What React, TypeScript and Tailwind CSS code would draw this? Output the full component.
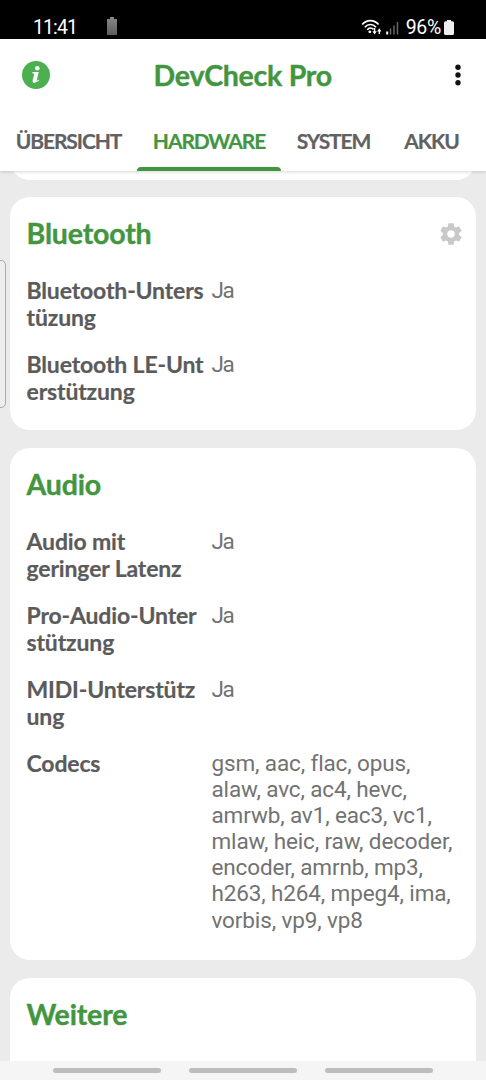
import { type ReactNode } from 'react'

type Row = { label: string[]; value: string[] }

const TABS = [
    { name: 'ÜBERSICHT', active: false, className: 'w-[137px] text-[#616161]' },
    { name: 'HARDWARE', active: true, className: 'w-[144px] text-[#43963f]' },
    { name: 'SYSTEM', active: false, className: 'w-[105px] text-[#616161]' },
    { name: 'AKKU', active: false, className: 'w-[91px] text-[#616161]' },
]

const BLUETOOTH_ROWS: Row[] = [
    { label: ['Bluetooth-Unters', 'tüzung'], value: ['Ja'] },
    { label: ['Bluetooth LE-Unt', 'erstützung'], value: ['Ja'] },
]

const AUDIO_ROWS: Row[] = [
    { label: ['Audio mit', 'geringer Latenz'], value: ['Ja'] },
    { label: ['Pro-Audio-Unter', 'stützung'], value: ['Ja'] },
    { label: ['MIDI-Unterstütz', 'ung'], value: ['Ja'] },
    {
        label: ['Codecs'],
        value: [
            'gsm, aac, flac, opus,',
            'alaw, avc, ac4, hevc,',
            'amrwb, av1, eac3, vc1,',
            'mlaw, heic, raw, decoder,',
            'encoder, amrnb, mp3,',
            'h263, h264, mpeg4, ima,',
            'vorbis, vp9, vp8',
        ],
    },
]

function StatusBar() {
    return (
        <div className="flex h-[39px] shrink-0 items-end bg-black pr-[32px] pl-[33px] font-['Roboto',sans-serif] text-white">
            <span className="w-[74px] text-[19.5px] leading-[23px] tracking-[-0.9px]">11:41</span>
            <svg width="10" height="18" viewBox="0 0 10 18" className="mb-[4px]">
                <defs>
                    <linearGradient id="battery" x1="0" y1="0" x2="0" y2="1">
                        <stop offset="0" stopColor="#8a8a8a" />
                        <stop offset="1" stopColor="#5c5c5c" />
                    </linearGradient>
                </defs>
                <path d="M3 0h4v2h3v16H0V2h3z" fill="url(#battery)" />
            </svg>
            <div className="ml-auto flex items-end">
                <svg width="38" height="17" viewBox="0 0 38 17" className="mr-[7px] mb-[3px]">
                    <g fill="none" stroke="#fff" strokeWidth="1.7">
                        <path d="M1.2 5.5C5.8 .3 13 .3 17.6 5.5" />
                        <path d="M3.8 8.2C7.1 4.6 11.7 4.6 15 8.2" />
                        <path d="M6.2 10.7c2-2.2 4.4-2.2 6.4-.3" />
                    </g>
                    <circle cx="8.8" cy="12.8" r="1.4" fill="#fff" />
                    <path d="M13.6 9v4M18.3 15v-4" stroke="#fff" strokeWidth="1.3" />
                    <path d="M11.4 12.2h4.4l-2.2 3.2zM16.2 12.4h4.2l-2.1-3.2z" fill="#fff" />
                    <path d="M25.2 12.5h2v3h-2z" fill="#fff" />
                    <path d="M28.8 9.5h1.5v6h-1.5zM32.2 6.5h1.5v9h-1.5zM35.7 3h1.5v12.5h-1.5z" fill="#666" />
                </svg>
                <span className="text-[19.5px] leading-[23px] tracking-[-0.3px]">96%</span>
                <svg width="10" height="15" viewBox="0 0 10 15" className="mb-[4px] ml-[3px]">
                    <path d="M3 0h4v1.2h1.5Q10 1.2 10 2.7v10.8Q10 15 8.5 15h-7Q0 15 0 13.5V2.7Q0 1.2 1.5 1.2H3z" fill="#eee" />
                </svg>
            </div>
        </div>
    )
}

function AppHeader() {
    return (
        <header className="z-10 h-[132px] shrink-0 bg-white shadow-[0_1px_3px_rgba(0,0,0,0.16)]">
            <div className="flex h-[72px] items-center justify-between pr-[24px] pl-[21.5px]">
                <svg width="28" height="28" viewBox="0 0 28 28">
                    <circle cx="14" cy="14" r="14" fill="#4caf50" />
                    <circle cx="15.3" cy="7.2" r="2.3" fill="#fff" />
                    <path d="M10.4 11.1h6.4l-2 7.8c-.2.8.5.9 2.2-.5l.5.7c-2 2-3.7 2.7-5 2.7-1.6 0-2.3-1.1-1.8-2.9l1.4-5.3c.2-.9-.1-1.3-1.7-1.4z" fill="#fff" />
                </svg>
                <h1 className="pb-px pl-[2px] text-[28.5px] leading-8 font-bold tracking-[-0.25px] text-[#43963f] [-webkit-text-stroke:0.4px_#43963f]">
                    DevCheck Pro
                </h1>
                <div className="flex w-7 justify-end">
                    <svg width="8" height="22" viewBox="0 0 8 22" fill="#111">
                        <circle cx="4" cy="3.3" r="2.7" />
                        <circle cx="4" cy="11" r="2.7" />
                        <circle cx="4" cy="18.7" r="2.7" />
                    </svg>
                </div>
            </div>
            <nav className="flex h-[60px]">
                {TABS.map((tab) => (
                    <div
                        key={tab.name}
                        className={`flex shrink-0 flex-col items-center text-[21px] font-bold tracking-[-1.1px] [-webkit-text-stroke:0.2px] ${tab.className}`}
                    >
                        <span className="flex h-14 items-center">
                            <span className="pt-[3px] leading-[26px]">{tab.name}</span>
                        </span>
                        {tab.active && <span className="h-1 w-full rounded-t-[4px] bg-[#43963f]" />}
                    </div>
                ))}
            </nav>
        </header>
    )
}

function Card({ title, action, rows = [] }: { title: string; action?: ReactNode; rows?: Row[] }) {
    return (
        <section className="mb-[18px] shrink-0 rounded-[20px] bg-white px-[16.5px] pb-[25px]">
            <div className="flex h-[80px] items-start justify-between pt-[20px]">
                <h2 className="text-[28.5px] leading-8 font-bold tracking-[-0.15px] text-[#43963f] [-webkit-text-stroke:0.4px_#43963f]">
                    {title}
                </h2>
                {action}
            </div>
            <div className="flex flex-col gap-5">
                {rows.map((row) => (
                    <div key={row.label[0]} className="flex">
                        <div className="w-[185px] shrink-0 text-[23px] leading-[27px] font-bold tracking-[-0.15px] whitespace-nowrap text-[#5b5b5b] [-webkit-text-stroke:0.2px]">
                            {row.label.map((line) => (
                                <div key={line}>{line}</div>
                            ))}
                        </div>
                        <div className="pb-0.5 font-['Roboto',sans-serif] text-[22.5px] leading-[26.1px] tracking-[-0.13px] whitespace-nowrap text-[#727272] [font-variant-ligatures:none]">
                            {row.value.map((line) => (
                                <div key={line} className={line === 'Ja' ? 'tracking-[-1.5px]' : ''}>
                                    {line}
                                </div>
                            ))}
                        </div>
                    </div>
                ))}
            </div>
        </section>
    )
}

function GearIcon() {
    return (
        <svg width="26" height="26" viewBox="0 0 24 24" fill="#c9c9c9" className="mt-[4px] mr-[-4px]">
            <path d="M19.43 12.98c.04-.32.07-.64.07-.98s-.03-.66-.07-.98l2.11-1.65c.19-.15.24-.42.12-.64l-2-3.46c-.12-.22-.39-.3-.61-.22l-2.49 1c-.52-.4-1.08-.73-1.69-.98l-.38-2.65C14.46 2.18 14.25 2 14 2h-4c-.25 0-.46.18-.49.42l-.38 2.65c-.61.25-1.17.59-1.69.98l-2.49-1c-.23-.09-.49 0-.61.22l-2 3.46c-.13.22-.07.49.12.64l2.11 1.65c-.04.32-.07.65-.07.98s.03.66.07.98l-2.11 1.65c-.19.15-.24.42-.12.64l2 3.46c.12.22.39.3.61.22l2.49-1c.52.4 1.08.73 1.69.98l.38 2.65c.03.24.24.42.49.42h4c.25 0 .46-.18.49-.42l.38-2.65c.61-.25 1.17-.59 1.69-.98l2.49 1c.23.09.49 0 .61-.22l2-3.46c.12-.22.07-.49-.12-.64l-2.11-1.65zM12 15.5c-1.93 0-3.5-1.57-3.5-3.5s1.57-3.5 3.5-3.5 3.5 1.57 3.5 3.5-1.57 3.5-3.5 3.5z" />
        </svg>
    )
}

export default function App() {
    return (
        <div className="flex h-[1080px] w-[486px] flex-col overflow-hidden bg-[#ebebeb] font-['Lato',sans-serif]">
            <StatusBar />
            <AppHeader />
            <main className="relative flex min-h-0 flex-1 flex-col overflow-hidden px-[10px]">
                <div className="mb-[17px] h-[9px] shrink-0 overflow-hidden">
                    <div className="mt-[-31px] h-10 rounded-[20px] bg-white" />
                </div>
                <Card title="Bluetooth" action={<GearIcon />} rows={BLUETOOTH_ROWS} />
                <Card title="Audio" rows={AUDIO_ROWS} />
                <Card title="Weitere" />
                {/* edge panel handle */}
                <div className="absolute top-[89px] left-[-6px] h-[148px] w-[12px] rounded-[5px] border border-[#aaa] bg-[#eee]" />
            </main>
            <div className="flex h-[19px] shrink-0 items-center justify-center gap-[28px] bg-[#f5f5f5]">
                <span className="h-[5px] w-[108px] rounded-full bg-[#bdbdbd]" />
                <span className="h-[5px] w-[108px] rounded-full bg-[#bdbdbd]" />
                <span className="h-[5px] w-[108px] rounded-full bg-[#bdbdbd]" />
            </div>
        </div>
    )
}
